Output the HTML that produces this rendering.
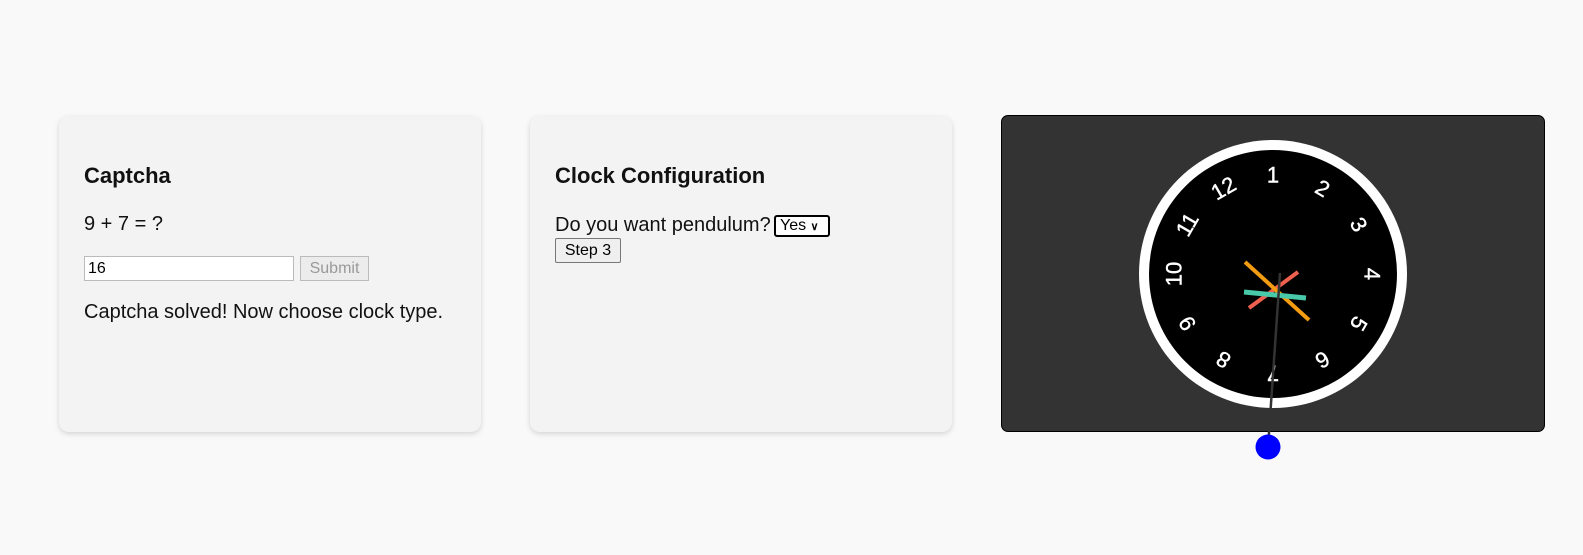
<!DOCTYPE html>
<html><head><meta charset="utf-8"><style>
body{margin:0;width:1583px;height:555px;background:#f9f9f9;font-family:"Liberation Sans",Arial,sans-serif;position:relative;overflow:hidden}
.card{position:absolute;top:116px;height:316px;width:422px;background:#f3f3f3;border-radius:10px;box-shadow:0 2px 6px rgba(0,0,0,.15)}
h2{position:absolute;left:25px;top:47px;margin:0;font-size:22px;font-weight:bold;color:#111}
.t{position:absolute;font-size:20px;color:#111;white-space:nowrap}
.inp{position:absolute;left:25px;top:140px;border:1px solid #bbb;background:#fff;font-size:16px;line-height:23px;padding-left:3px;box-sizing:border-box;width:210px;height:25px}
.btn{position:absolute;border:1px solid #bbb;background:#ececec;color:#999;font-size:16px;text-align:center;line-height:23px;box-sizing:border-box}
</style></head><body>
<div class="card" style="left:59px">
<h2>Captcha</h2>
<div class="t" style="left:25px;top:97px">9 + 7 = ?</div>
<div class="inp">16</div>
<div class="btn" style="left:241px;top:140px;width:69px;height:25px">Submit</div>
<div class="t" style="left:25px;top:185px">Captcha solved! Now choose clock type.</div>
</div>
<div class="card" style="left:530px">
<h2>Clock Configuration</h2>
<div class="t" style="left:25px;top:98px">Do you want pendulum?</div>
<div style="position:absolute;left:244px;top:99px;width:56px;height:22px;border:2px solid #000;border-radius:3px;background:#fff;box-sizing:border-box;font-size:16px;line-height:18px;padding-left:4px">Yes <span style="font-size:11px;font-weight:bold">&#8744;</span></div>
<div style="position:absolute;left:25px;top:122px;width:66px;height:25px;border:1px solid #767676;border-radius:2px;background:#efefef;box-sizing:border-box;font-size:16px;line-height:23px;text-align:center;color:#000">Step 3</div>
</div>
<div style="position:absolute;left:1001px;top:115px;width:544px;height:317px;background:#333;border:1px solid #000;border-radius:7px;box-sizing:border-box"></div>
<svg style="position:absolute;left:0;top:0" width="1583" height="555">
<circle cx="1273" cy="274" r="134" fill="#fff"/>
<circle cx="1273" cy="274" r="124" fill="#000"/>
<g fill="#fff" stroke="#fff" stroke-width="0.4" font-family="Liberation Sans,Arial,sans-serif" font-size="22" text-anchor="middle" dominant-baseline="central">
<text x="1273" y="175" transform="rotate(0 1273 274)">1</text>
<text x="1273" y="175" transform="rotate(30 1273 274)">2</text>
<text x="1273" y="175" transform="rotate(60 1273 274)">3</text>
<text x="1273" y="175" transform="rotate(90 1273 274)">4</text>
<text x="1273" y="175" transform="rotate(120 1273 274)">5</text>
<text x="1273" y="175" transform="rotate(150 1273 274)">6</text>
<text x="1273" y="175" transform="rotate(180 1273 274)">7</text>
<text x="1273" y="175" transform="rotate(210 1273 274)">8</text>
<text x="1273" y="175" transform="rotate(240 1273 274)">9</text>
<text x="1273" y="175" transform="rotate(270 1273 274)">10</text>
<text x="1273" y="175" transform="rotate(300 1273 274)">11</text>
<text x="1273" y="175" transform="rotate(330 1273 274)">12</text>
</g>
<line x1="1298" y1="272" x2="1249" y2="308" stroke="#f0604f" stroke-width="4"/>
<line x1="1245" y1="262" x2="1309" y2="320" stroke="#f39c12" stroke-width="4"/>
<line x1="1244" y1="292" x2="1306" y2="298" stroke="#48c9a9" stroke-width="5"/>
<line x1="1280" y1="273" x2="1268" y2="447" stroke="#333" stroke-width="2.5"/>
<circle cx="1268" cy="447" r="12.5" fill="#0000ff"/>
</svg>
</body></html>
